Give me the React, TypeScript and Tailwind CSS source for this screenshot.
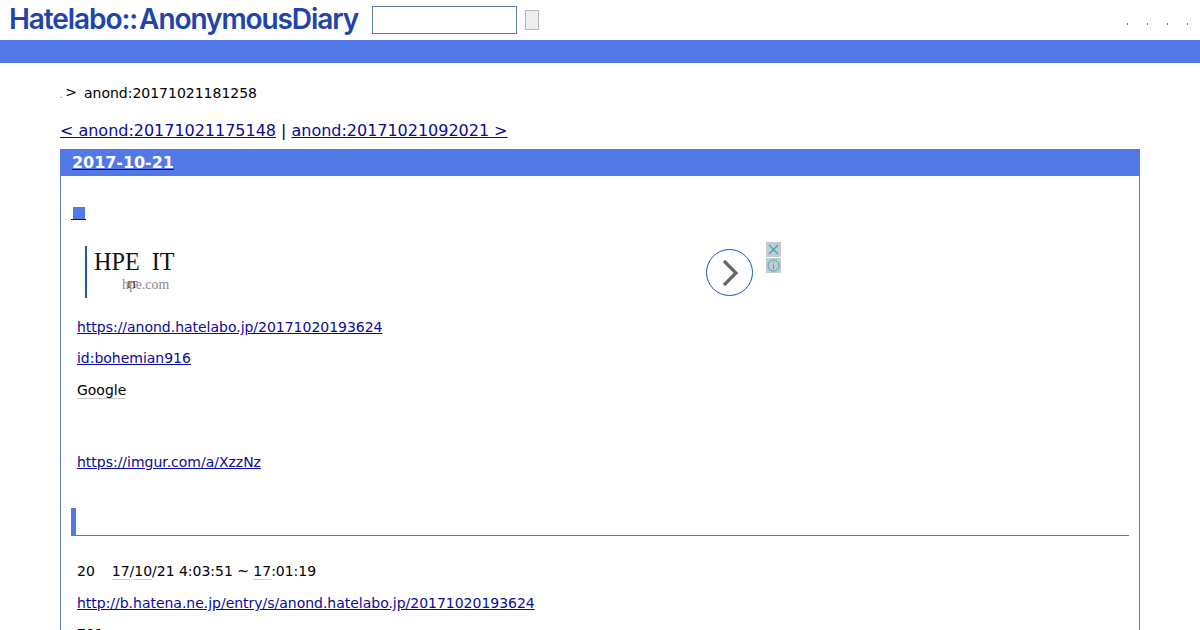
export default function App() {
  const link = "text-[#0a0a9a] underline";
  const abbr = "border-b border-[#cccccc]";
  return (
    <div className="h-[630px] w-[1200px] overflow-hidden bg-white font-['DejaVu_Sans',sans-serif] text-[14px] text-black">
      <header className="relative flex h-[40px] items-center">
        <div className="-mt-[2px] ml-[9px] w-[349px] whitespace-nowrap font-['Inter',sans-serif] text-[28px] font-semibold leading-[40px] tracking-[-1.08px] text-[#2143ad]">
          Hatelabo::<span className="ml-[2px]">AnonymousDiary</span>
        </div>
        <input className="ml-[14px] box-border h-[28px] w-[145px] border border-[#5f7baa] bg-white" aria-label="search" />
        <button className="ml-[8px] h-[20px] w-[14px] border border-[#b5b5b5] bg-[#efefef]" aria-label="go" />
        <div className="absolute left-[1127px] top-[23px] flex gap-[19px]">
          {[0, 1, 2, 3].map((i) => (
            <span key={i} className="h-[2px] w-[1px] bg-[#777777]" />
          ))}
        </div>
      </header>
      <div className="h-[23px] bg-[#5279e7]" />

      <main className="mx-[60px]">
        <div className="mt-[21px] flex h-[18px] items-center whitespace-nowrap leading-[18px]">
          <span className="mt-[6px] text-[7px] leading-none">.</span>
          <span className="ml-[3px] mt-[-3px]">&gt;</span>
          <span className="ml-[7px] tracking-[-0.01px]">anond:20171021181258</span>
        </div>

        <nav className="mt-[18px] h-[21px] whitespace-nowrap text-[16px] leading-[21px] tracking-[-0.02px]">
          <a className={link}>&lt; anond:20171021175148</a> | <a className={link}>anond:20171021092021 &gt;</a>
        </nav>

        <section className="mt-[8px] h-[600px] border border-[#5f7baa]">
          <h2 className="-mt-px -mx-px flex h-[27px] items-center bg-[#5279e7] pl-[12px] text-[16px] font-bold tracking-[-0.05px] text-white">
            <span className="underline decoration-[#0a0a9a]">2017-10-21</span>
          </h2>

          <div className="px-[10px]">
            <div className="mt-[31px] flex h-[14px] items-start">
              <span className="block h-[13px] border-b border-[#0a0a9a] pl-[2px] pr-px">
                <span className="block h-[12px] w-[12px] bg-[#5279e7]" />
              </span>
            </div>

            <div className="relative ml-[14px] mt-[25px] flex h-[52px] w-[696px]">
              <div className="w-[2px] bg-[#1c5aa8]" />
              <div className="relative ml-[7px] font-['Liberation_Serif',serif]">
                <div className="mt-[2px] whitespace-pre text-[24.2px] leading-[28px] text-[#111111]">HPE  IT</div>
                <div className="ml-[28px] mt-[1px] whitespace-nowrap text-[13.8px] leading-[15px] text-[#8a8a8a]">
                  hpe.com
                </div>
                <div className="absolute left-[33px] top-[31px] text-[11px] leading-[15px] text-[#333333]">IT</div>
              </div>
              <div className="absolute left-[621px] top-[3px] flex h-[47px] w-[47px] items-center justify-center rounded-full border border-[#1c5aa8]">
                <svg width="20" height="28" viewBox="0 0 20 28" fill="none" stroke="#666666" strokeWidth="3.2">
                  <path d="M4 2 L16 14 L4 26" />
                </svg>
              </div>
              <div className="absolute left-[681px] top-[-4px] flex w-[15px] flex-col gap-px">
                <div className="flex h-[15px] items-center justify-center bg-[#c8cbcd]">
                  <svg width="11" height="11" viewBox="0 0 11 11" stroke="#3aa0bf" strokeWidth="1.2">
                    <path d="M1 1 L10 10 M10 1 L1 10" />
                  </svg>
                </div>
                <div className="flex h-[15px] items-center justify-center bg-[#c8cbcd]">
                  <svg width="13" height="13" viewBox="0 0 13 13" fill="none" stroke="#3aa0bf" strokeWidth="1">
                    <circle cx="6.5" cy="6.5" r="5.5" />
                    <path d="M6.5 5.5 V10 M6.5 3 V4.3" />
                  </svg>
                </div>
              </div>
            </div>

            <div className="ml-[6px] leading-[18px] tracking-[-0.02px]">
              <p className="mt-[20px]"><a className={link}>https://anond.hatelabo.jp/20171020193624</a></p>
              <p className="mt-[13px]"><a className={link}>id:bohemian916</a></p>
              <p className="mt-[14px]"><span className={abbr}>Google</span></p>
              <p className="mt-[54px]"><a className={link}>https://imgur.com/a/XzzNz</a></p>
            </div>

            <div className="mt-[37px] h-[28px] border-b border-[#5f7baa]">
              <div className="h-[27px] w-[5px] bg-[#5279e7]" />
            </div>

            <div className="ml-[6px] leading-[18px] tracking-[-0.02px]">
              <p className="mt-[26px] whitespace-pre">
                20<span className="ml-[17px]" /><span className={abbr}>17</span>/<span className={abbr}>10</span>/21 4:03:51 ~ <span className={abbr}>17</span>:01:19
              </p>
              <p className="mt-[14px]"><a className={link}>http://b.hatena.ne.jp/entry/s/anond.hatelabo.jp/20171020193624</a></p>
              <p className="mt-[13px]">791</p>
            </div>
          </div>
        </section>
      </main>
    </div>
  );
}
